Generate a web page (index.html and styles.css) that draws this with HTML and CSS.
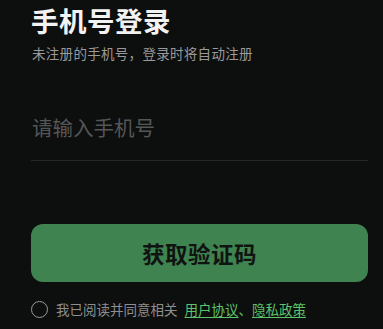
FILE: index.html
```html
<!DOCTYPE html>
<html lang="zh-CN">
<head>
<meta charset="utf-8">
<link rel="stylesheet" href="styles.css">
</head>
<body>
<div class="page">
  <h1 class="title">手机号登录</h1>
  <p class="subtitle">未注册的手机号，登录时将自动注册</p>
  <div class="field">
    <input class="phone" type="text" placeholder="请输入手机号">
  </div>
  <button class="submit">获取验证码</button>
  <div class="agree">
    <span class="check"></span>
    <span class="agree-text">我已阅读并同意相关</span>
    <span class="links"><a class="link">用户协议</a>、<a class="link">隐私政策</a></span>
  </div>
</div>
</body>
</html>
```

FILE: styles.css
```css
html, body {
  margin: 0;
  padding: 0;
  background: #0d0e0e;
  width: 383px;
  height: 329px;
  overflow: hidden;
}
body {
  font-family: "Noto Sans CJK SC", "Noto Sans", sans-serif;
}
.page {
  padding: 0 15px 0 31px;
  display: flex;
  flex-direction: column;
}
.title {
  margin: 0;
  font-size: 27.5px;
  line-height: 40px;
  font-weight: 700;
  color: #f2f2f2;
  letter-spacing: 0.5px;
}
.subtitle {
  margin: 3px 0 0 1px;
  font-size: 13.5px;
  line-height: 20px;
  color: #9a9a9a;
  letter-spacing: 0.3px;
}
.field {
  margin-top: 50px;
  border-bottom: 1px solid #262727;
  height: 47px;
  display: flex;
  align-items: flex-start;
}
.phone {
  background: transparent;
  border: none;
  outline: none;
  padding: 0 0 0 1px;
  margin: 0;
  width: 100%;
  font-family: inherit;
  font-size: 20.5px;
  line-height: 28px;
  height: 28px;
  color: #ddd;
}
.phone::placeholder {
  color: #555656;
}
.submit {
  margin-top: 63px;
  height: 58px;
  width: 337px;
  border: none;
  border-radius: 12px;
  background: #3f8350;
  color: #101410;
  font-family: inherit;
  font-size: 22.5px;
  font-weight: 700;
  letter-spacing: 0.5px;
  padding: 0;
}
.agree {
  margin-top: 17px;
  display: flex;
  align-items: center;
  font-size: 13.5px;
  line-height: 20px;
  color: #8e8e8e;
}
.check {
  width: 15px;
  height: 15px;
  border: 1.5px solid #9a9a9a;
  border-radius: 50%;
  margin-right: 8px;
  flex: none;
}
.agree-text {
  margin-right: 7px;
}
.links {
  color: #5cc46b;
}
.link {
  color: #5cc46b;
  text-decoration: underline;
  text-underline-offset: 2px;
}
```
